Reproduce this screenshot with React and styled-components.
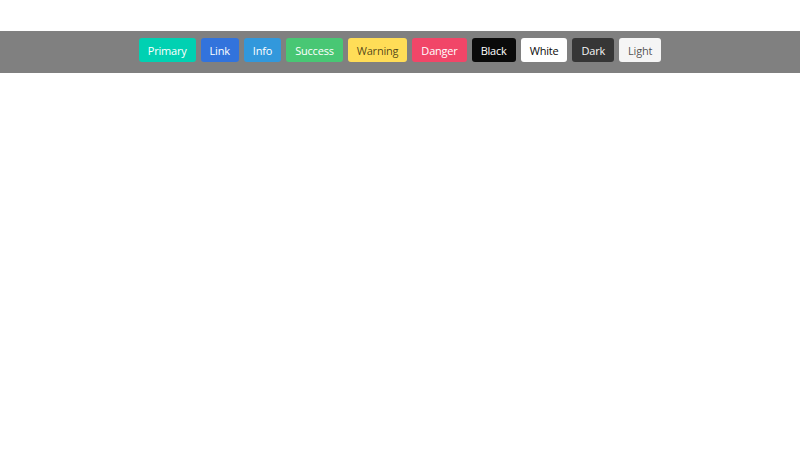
import React from "react";
import styled, { createGlobalStyle } from "styled-components";

const colors = {
    primary: { bg: '#00d1b2', fg: '#fff' },
    link: { bg: '#3273dc', fg: '#fff' },
    info: { bg: '#3298dc', fg: '#fff' },
    success: { bg: '#48c774', fg: '#fff' },
    warning: { bg: '#ffdd57', fg: 'rgba(0,0,0,0.7)' },
    danger: { bg: '#f14668', fg: '#fff' },
    black: { bg: '#0a0a0a', fg: '#fff' },
    white: { bg: '#fff', fg: '#0a0a0a' },
    dark: { bg: '#363636', fg: '#f5f5f5' },
    light: { bg: '#f5f5f5', fg: 'rgba(0,0,0,0.7)' },
}

const botoes = ['Primary', 'Link', 'Info', 'Success', 'Warning', 'Danger', 'Black', 'White', 'Dark', 'Light']

export default function App(){
    return(
        <>
            <Global />
            <Page>
                <Bar>
                    {botoes.map((nome) => (
                        <Button key={nome} $cor={nome.toLowerCase()}>{nome}</Button>
                    ))}
                </Bar>
            </Page>
        </>
    )
}

const Global = createGlobalStyle`
    body{
        margin: 0;
        background: #fff;
        font-family: "Open Sans", "Noto Sans", sans-serif;
    }
`;

const Page = styled.div`
    padding-top: 31px;
`;

const Bar = styled.div`
    display: flex;
    justify-content: center;
    gap: 5px;
    padding: 7px 0 11px;
    background-color: #808080;
`;

const Button = styled.button`
    height: 24px;
    padding: 0 8px;
    border: 1px solid transparent;
    border-radius: 3px;
    font-family: inherit;
    font-size: 11px;
    letter-spacing: -0.2px;
    line-height: 1;
    background-color: ${p => colors[p.$cor].bg};
    color: ${p => colors[p.$cor].fg};
    cursor: pointer;
`;
